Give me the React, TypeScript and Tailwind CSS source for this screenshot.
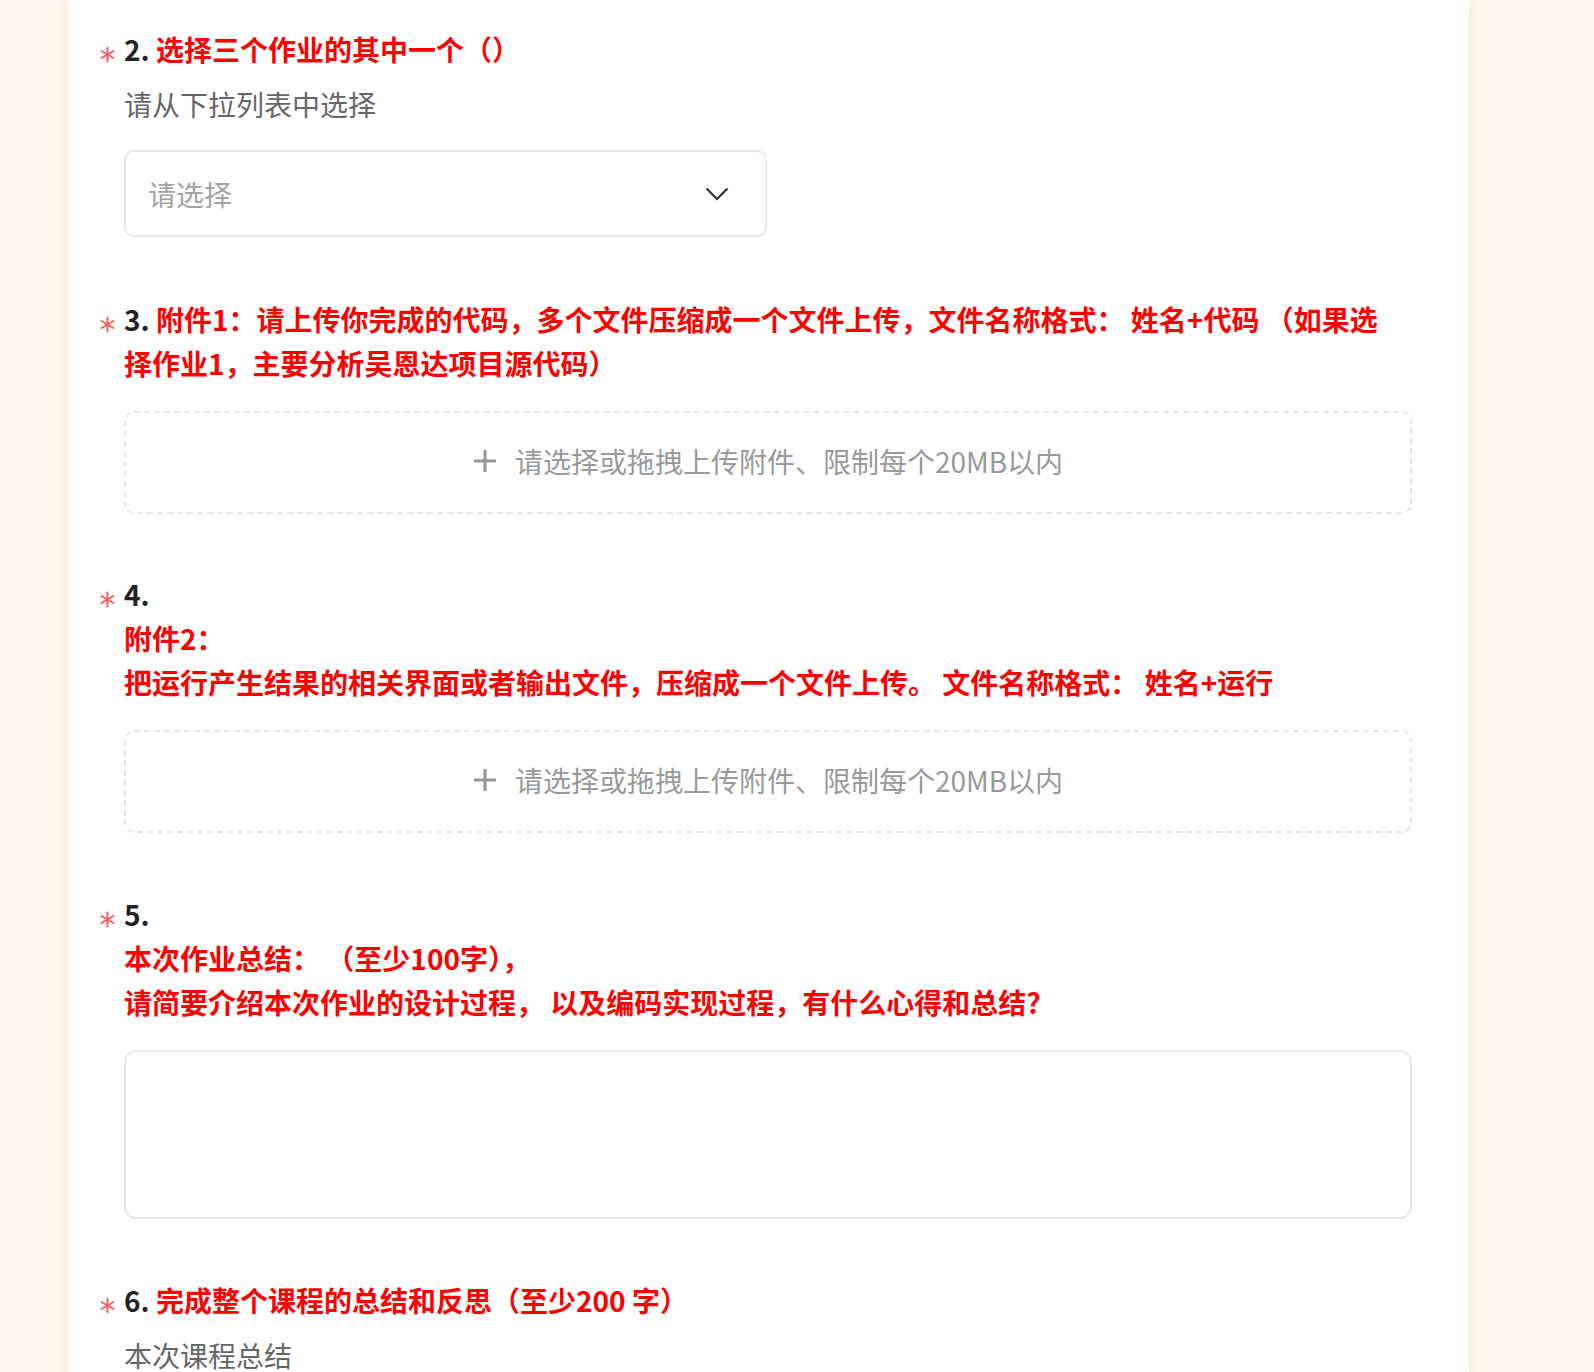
import React from 'react';

function Star() {
  return (
    <svg
      className="absolute left-[-24px] top-[19px] h-[17px] w-[15px]"
      viewBox="0 0 15 17"
      fill="none"
      stroke="#f5595c"
      strokeWidth="1.9"
      strokeLinecap="round"
    >
      <path d="M7.5 1.5v14M1.5 5l12 7M1.5 12l12-7" />
    </svg>
  );
}

function Title({ num, children }: { num: string; children: React.ReactNode }) {
  return (
    <div className="relative text-[28px] leading-[44px] font-bold">
      <Star />
      <span className="text-[#222]">{num}</span>{' '}
      <span className="text-[#ff0000]">{children}</span>
    </div>
  );
}

function Upload() {
  return (
    <div className="mt-[26px] flex h-[103px] items-center justify-center gap-[18px] rounded-[10px] border-2 border-dashed border-[#e6e6e6] pb-[4px] text-[28px] text-[#999]">
      <svg className="h-[24px] w-[24px]" viewBox="0 0 24 24" fill="none" stroke="#999" strokeWidth="3.2">
        <path d="M12 1v22M1 12h22" />
      </svg>
      <span>请选择或拖拽上传附件、限制每个20MB以内</span>
    </div>
  );
}

export default function App() {
  return (
    <div className="h-[1372px] overflow-hidden bg-[#fdf6ed] font-['Noto_Sans_CJK_SC',sans-serif]">
      <div className="ml-[68px] min-h-[1372px] w-[1401px] bg-white pl-[56px] pr-[57px] pt-[27px] shadow-[0_0_14px_rgba(225,195,160,0.35)]">
        {/* 2 */}
        <div>
          <Title num="2.">选择三个作业的其中一个（）</Title>
          <div className="mt-[11px] text-[28px] leading-[44px] text-[#666]">请从下拉列表中选择</div>
          <div className="mt-[24px] flex h-[87px] w-[643px] items-center justify-between rounded-[10px] border-2 border-[#e8e8e8] pl-[22px] pr-[36px]">
            <span className="text-[28px] text-[#a3a3a3]">请选择</span>
            <svg className="h-[14px] w-[24px]" viewBox="0 0 24 14" fill="none" stroke="#333" strokeWidth="2.2">
              <path d="M1.5 1.5l10.5 10.5 10.5-10.5" />
            </svg>
          </div>
        </div>

        {/* 3 */}
        <div className="mt-[60px]">
          <Title num="3.">
            附件1：请上传你完成的代码，多个文件压缩成一个文件上传，文件名称格式： 姓名+代码 （如果选
            <br />
            择作业1，主要分析吴恩达项目源代码）
          </Title>
          <Upload />
        </div>

        {/* 4 */}
        <div className="mt-[58px]">
          <Title num="4.">
            <br />
            附件2：
            <br />
            把运行产生结果的相关界面或者输出文件，压缩成一个文件上传。 文件名称格式： 姓名+运行
          </Title>
          <Upload />
        </div>

        {/* 5 */}
        <div className="mt-[59px]">
          <Title num="5.">
            <br />
            本次作业总结： （至少100字），
            <br />
            请简要介绍本次作业的设计过程， 以及编码实现过程，有什么心得和总结?
          </Title>
          <div className="mt-[26px] h-[169px] rounded-[12px] border-2 border-[#e8e8e8]" />
        </div>

        {/* 6 */}
        <div className="mt-[59px]">
          <Title num="6.">完成整个课程的总结和反思（至少200 字）</Title>
          <div className="mt-[11px] text-[28px] leading-[44px] text-[#666]">本次课程总结</div>
        </div>
      </div>
    </div>
  );
}
